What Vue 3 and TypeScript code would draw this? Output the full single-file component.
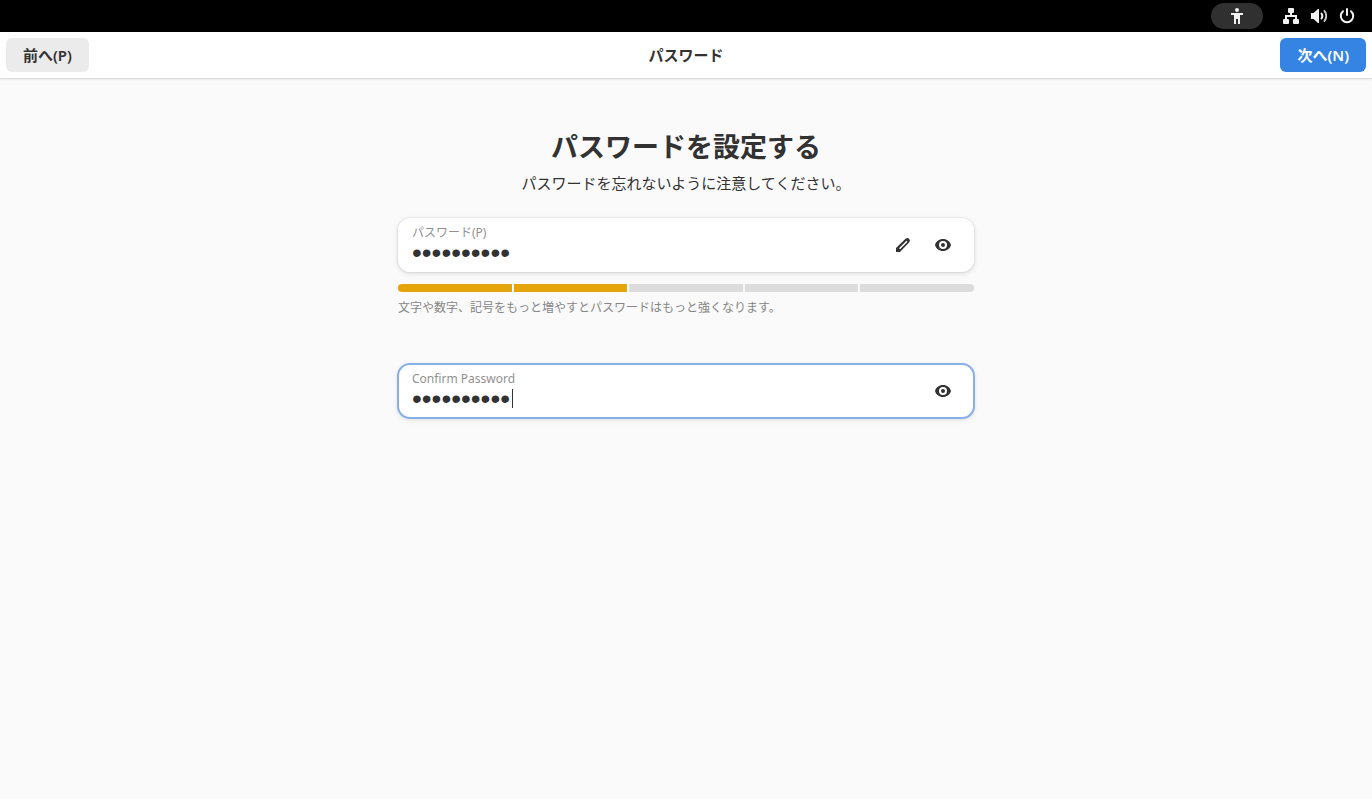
<script setup lang="ts">
import { ref } from 'vue'

const password = ref('abcdefgh12')
const confirmation = ref('abcdefgh12')
const strength = ref(2)
const levels = [1, 2, 3, 4, 5]
const showPassword = ref(false)
const showConfirmation = ref(false)
</script>

<template>
  <div class="screen">
    <div class="topbar">
      <button class="a11y" aria-label="アクセシビリティ">
        <svg viewBox="0 0 16 16" width="16" height="16" fill="#f2f2f2">
          <circle cx="8" cy="2" r="2" />
          <path d="M2 5h12v2h-3v9H9v-5H7v5H5V7H2z" />
        </svg>
      </button>
      <button class="status" aria-label="システム">
        <svg viewBox="0 0 16 16" width="16" height="16" fill="#f2f2f2">
          <rect x="5" y="0" width="6" height="5" rx="1" />
          <rect x="0" y="11" width="6" height="5" rx="1" />
          <rect x="10" y="11" width="6" height="5" rx="1" />
          <path d="M7 4h2v3h5v5h-2V9H4v3H2V7h5z" />
        </svg>
        <svg viewBox="0 0 16 16" width="16" height="16">
          <path d="M0 5h2.5L7 1h1v14H7l-4.500-4H0z" fill="#f2f2f2" />
          <path d="M10.500 5.500q1.700 2.500 0 5" fill="none" stroke="#f2f2f2" stroke-width="2" stroke-linecap="round" />
          <path d="M13.500 3q3.500 5 0 10" fill="none" stroke="#c4c4c4" stroke-width="2" stroke-linecap="round" />
        </svg>
        <svg viewBox="0 0 16 16" width="16" height="16" fill="none" stroke="#f2f2f2" stroke-width="2" stroke-linecap="round">
          <path d="M4 3.200a6.200 6.200 0 1 0 8 0M8 1v6" />
        </svg>
      </button>
    </div>

    <header class="header">
      <button class="nav back">前へ(P)</button>
      <h1 class="title">パスワード</h1>
      <button class="nav next">次へ(N)</button>
    </header>

    <main class="page">
      <h2 class="heading">パスワードを設定する</h2>
      <p class="subtitle">パスワードを忘れないように注意してください。</p>

      <div class="row">
        <div class="field">
          <label for="password">パスワード(P)</label>
          <input id="password" v-model="password" :type="showPassword ? 'text' : 'password'" />
        </div>
        <button class="tool" aria-label="パスワードを生成">
          <svg viewBox="0 0 16 16" width="16" height="16">
            <path d="M1 15v-4L10.800 1.500q1.600-1.300 3.200.3t.5 3.200L5 15zM5 12.200L12.500 4.700l-1-1L4 11.200z" fill="#323232" fill-rule="evenodd" />
          </svg>
        </button>
        <button class="tool" aria-label="パスワードを表示" @click="showPassword = !showPassword">
          <svg viewBox="0 0 16 16" width="16" height="16">
            <path d="M8 2C4 2 1 4.500 0 8c1 3.500 4 6 8 6s7-2.500 8-6c-1-3.500-4-6-8-6zm0 2a4 4 0 1 1 0 8 4 4 0 0 1 0-8z" fill="#323232" fill-rule="evenodd" />
            <circle cx="8" cy="8" r="2" fill="#323232" />
          </svg>
        </button>
      </div>

      <div class="meter" role="meter" aria-label="パスワードの強度" :aria-valuenow="strength" aria-valuemin="0" aria-valuemax="5">
        <span v-for="level in levels" :key="level" class="block" :class="{ filled: level <= strength }"></span>
      </div>
      <p class="hint">文字や数字、記号をもっと増やすとパスワードはもっと強くなります。</p>

      <div class="row focused">
        <div class="field">
          <label for="confirm">Confirm Password</label>
          <input id="confirm" v-model="confirmation" :type="showConfirmation ? 'text' : 'password'" />
          <span class="caret"></span>
        </div>
        <button class="tool" aria-label="パスワードを表示" @click="showConfirmation = !showConfirmation">
          <svg viewBox="0 0 16 16" width="16" height="16">
            <path d="M8 2C4 2 1 4.500 0 8c1 3.500 4 6 8 6s7-2.500 8-6c-1-3.500-4-6-8-6zm0 2a4 4 0 1 1 0 8 4 4 0 0 1 0-8z" fill="#323232" fill-rule="evenodd" />
            <circle cx="8" cy="8" r="2" fill="#323232" />
          </svg>
        </button>
      </div>
    </main>
  </div>
</template>

<style>
body {
  background: #fafafa;
}
</style>

<style scoped>
.screen {
  min-height: 100vh;
  background: #fafafa;
  color: #323232;
  font-family: "Noto Sans", "Noto Sans CJK JP", sans-serif;
  font-size: 15px;
}
button {
  border: 0;
  padding: 0;
  margin: 0;
  background: none;
  color: inherit;
  font: inherit;
}
svg {
  display: block;
}
.topbar {
  height: 32px;
  box-sizing: border-box;
  padding: 0 17px;
  background: #000;
  display: flex;
  align-items: center;
  justify-content: flex-end;
  gap: 20px;
}
.a11y {
  width: 52px;
  height: 26px;
  border-radius: 13px;
  background: #303030;
  display: flex;
  align-items: center;
  justify-content: center;
}
.status {
  display: flex;
  gap: 12px;
}
.header {
  height: 46px;
  padding: 0 6px;
  background: #fff;
  border-bottom: 1px solid #dcdcdc;
  box-shadow: 0 1px 2px rgba(0, 0, 0, 0.06);
  display: grid;
  grid-template-columns: 1fr auto 1fr;
  align-items: center;
}
.nav {
  height: 34px;
  padding: 0 17px 2px;
  border-radius: 6px;
  font-weight: 600;
}
.back {
  justify-self: start;
  background: #ebebeb;
}
.next {
  justify-self: end;
  background: #3584e4;
  color: #fff;
}
.title {
  margin: 0;
  padding-bottom: 2px;
  font-size: 15px;
  font-weight: 700;
}
.page {
  max-width: 576px;
  margin: 0 auto;
  padding-top: 48px;
}
.heading {
  margin: 0;
  font-size: 27px;
  line-height: 40px;
  font-weight: 700;
  text-align: center;
}
.subtitle {
  margin: 5px 0 24px;
  line-height: 22px;
  text-align: center;
}
.row {
  height: 54px;
  box-sizing: border-box;
  padding: 0 11px 0 14px;
  border-radius: 12px;
  background: #fff;
  box-shadow: 0 0 0 1px rgba(0, 0, 0, 0.03), 0 1px 3px 1px rgba(0, 0, 0, 0.07), 0 2px 6px 2px rgba(0, 0, 0, 0.03);
  display: flex;
  align-items: center;
}
.focused {
  outline: 2px solid #86b0e8;
  outline-offset: -1px;
}
.field {
  position: relative;
  flex: 1;
  display: flex;
  flex-direction: column;
  padding-bottom: 2px;
}
label {
  font-size: 12px;
  line-height: 18px;
  color: #919191;
}
input {
  width: 100%;
  height: 22px;
  box-sizing: border-box;
  padding: 0;
  border: 0;
  outline: 0;
  background: transparent;
  color: #323232;
  font-family: "Liberation Sans", sans-serif;
  font-size: 28px;
  line-height: 22px;
}
.caret {
  position: absolute;
  left: 100px;
  bottom: 4px;
  width: 1px;
  height: 19px;
  background: #323232;
}
.tool {
  width: 40px;
  height: 34px;
  display: grid;
  place-items: center;
}
.meter {
  display: flex;
  gap: 2px;
  height: 8px;
  margin-top: 12px;
  border-radius: 4px;
  overflow: hidden;
}
.block {
  flex: 1;
  background: #dcdcdc;
}
.filled {
  background: #e5a50a;
}
.hint {
  margin: 7px 0 47px;
  font-size: 12px;
  line-height: 18px;
  color: #868686;
}
</style>
